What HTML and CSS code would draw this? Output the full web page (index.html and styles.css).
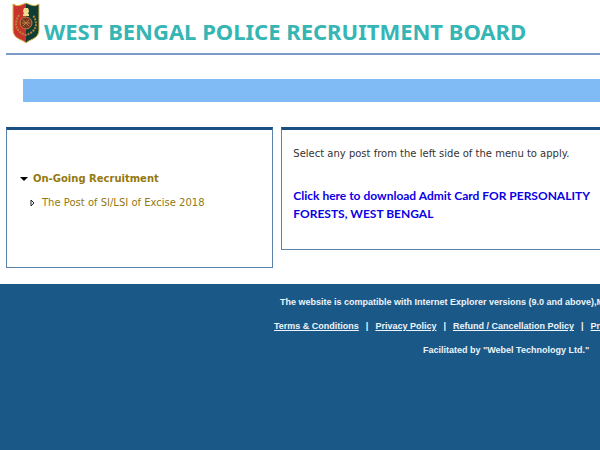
FILE: index.html
```html
<!DOCTYPE html>
<html lang="en">
  <head>
    <meta charset="utf-8" />
    <title>West Bengal Police Recruitment Board</title>
    <link rel="stylesheet" href="styles.css">
  </head>
  <body>
    <header class="header">
      <svg class="logo" viewBox="0 0 28 42" aria-hidden="true">
        <path d="M1 2 Q5 5 9 3 L14 1 V41 Q12 39 7 37 Q1 34 1 28 Z" fill="#c8332e" />
        <path d="M14 1 L19 3 Q23 5 27 2 V28 Q27 34 21 37 Q16 39 14 41 Z" fill="#103c36" />
        <path d="M1 2 Q5 5 9 3 L14 1 L19 3 Q23 5 27 2 V28 Q27 34 21 37 Q16 39 14 41 Q12 39 7 37 Q1 34 1 28 Z" fill="none" stroke="#d9b74c" />
        <g fill="none" stroke="#b98238">
          <circle cx="14" cy="21" r="6" fill="#7c3a2b" />
          <path d="M7 13 Q1 23 7 29 Q10 32 14 33 Q18 32 21 29 Q27 23 21 13" stroke-width="2" stroke-dasharray="2 1" />
          <path d="M10 21 h8 M11 18 l6 6 M17 18 l-6 6" />
        </g>
        <path d="M12 6 h4 l1 3 -1 3 h1 v2 h-6 v-2 h1 l-1 -3 Z" fill="#f4d98b" />
      </svg>
      <h1 class="title">WEST BENGAL POLICE RECRUITMENT BOARD</h1>
    </header>
    <div class="banner"></div>
    <main class="content">
      <nav class="panel menu">
        <div class="menu-head">
          <svg class="arrow-down" viewBox="0 0 8 4" aria-hidden="true"><path d="M0 0 H8 L4 4 Z" /></svg>
          <a href="#">On-Going Recruitment</a>
        </div>
        <div class="menu-item">
          <svg class="arrow-right" viewBox="0 0 5 8" aria-hidden="true"><path d="M1 1 L4 4 L1 7 Z" fill="#fff" stroke="#222" /></svg>
          <a href="#">The Post of SI/LSI of Excise 2018</a>
        </div>
      </nav>
      <section class="panel notice">
        <p>Select any post from the left side of the menu to apply.</p>
        <a class="admit" href="#">Click here to download Admit Card FOR PERSONALITY<br />FORESTS, WEST BENGAL</a>
      </section>
    </main>
    <footer class="footer">
      <p class="compat">The website is compatible with Internet Explorer versions (9.0 and above),M</p>
      <p class="links">
        <a href="#">Terms &amp; Conditions</a><span>|</span><a href="#">Privacy Policy</a><span>|</span><a href="#">Refund / Cancellation Policy</a><span>|</span><a href="#">Pr</a>
      </p>
      <p class="credit">Facilitated by "Webel Technology Ltd."</p>
    </footer>
  </body>
</html>
```
FILE: styles.css
```css
* {
  box-sizing: border-box;
}
body {
  margin: 0;
  min-height: 100vh;
  display: flex;
  flex-direction: column;
  background: #fff;
  font-family: Verdana, "DejaVu Sans", sans-serif;
  font-size: 10px;
  overflow-x: hidden;
}
p {
  margin: 0;
}
.header {
  display: flex;
  height: 55px;
  margin-left: 6px;
  padding: 2px 0 0 6px;
  border-bottom: 2px solid #7b9ac6;
}
.logo {
  width: 28px;
  height: 42px;
  flex: none;
}
.title {
  margin: 13px 0 0 4px;
  font-family: "Segoe UI", "Noto Sans", sans-serif;
  font-size: 22px;
  line-height: 32px;
  font-weight: bold;
  color: #35b5b3;
  white-space: nowrap;
}
.banner {
  height: 23px;
  margin: 24px 0 25px 23px;
  background: #80bbf6;
}
.content {
  display: flex;
  align-items: flex-start;
  gap: 8px;
  margin-left: 6px;
}
.panel {
  border: 1px solid #5b82a8;
  border-top: 3px solid #1b4f82;
}
.menu {
  flex: none;
  width: 45%;
  height: 141px;
  padding: 41px 0 0 13px;
}
.menu a {
  color: #94790f;
  text-decoration: none;
}
.menu-head,
.menu-item {
  display: flex;
  align-items: center;
  line-height: 16px;
}
.menu-head {
  gap: 5px;
  font-weight: bold;
}
.menu-item {
  gap: 7px;
  margin: 8px 0 0 10px;
}
.arrow-down {
  width: 8px;
  height: 4px;
}
.arrow-right {
  width: 5px;
  height: 8px;
}
.notice {
  flex: 1;
  min-width: 0;
  height: 123px;
  padding: 16px 0 0 11px;
  border-right: 0;
  line-height: 16px;
  color: #333;
  white-space: nowrap;
}
.admit {
  display: block;
  margin-top: 25px;
  font-family: Lato, Calibri, sans-serif;
  font-size: 12px;
  line-height: 18px;
  font-weight: bold;
  color: #0a00e6;
  text-decoration: none;
}
.footer {
  flex: 1;
  margin-top: 16px;
  padding: 10px 0 0 274px;
  background: #1a5888;
  color: #eef4f9;
  font-family: Arial, "Liberation Sans", sans-serif;
  font-size: 9px;
  line-height: 16px;
  font-weight: bold;
  white-space: nowrap;
  overflow: hidden;
}
.footer a {
  color: inherit;
}
.compat {
  padding-left: 6px;
}
.links {
  margin: 8px 0;
}
.links span {
  margin: 0 7px;
}
.credit {
  padding-left: 149px;
}
```
